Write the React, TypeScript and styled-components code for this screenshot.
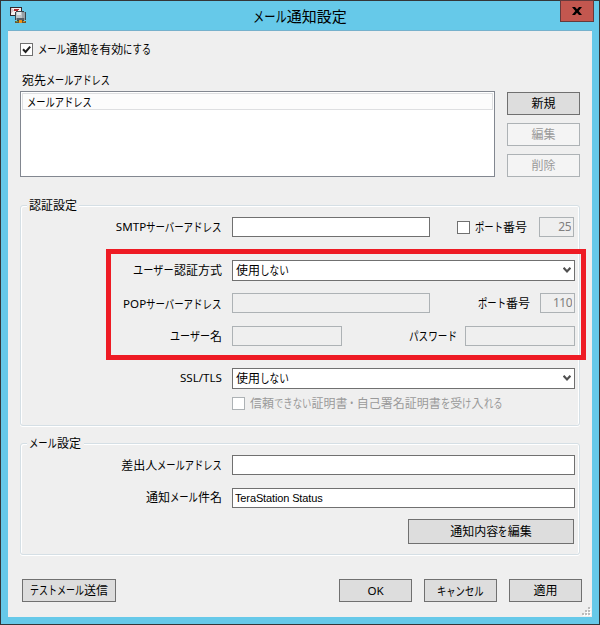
import React from "react";
import styled, { createGlobalStyle, css } from "styled-components";

const GlobalStyle = createGlobalStyle`
  * { box-sizing: border-box; }
  body {
    margin: 0;
    overflow: hidden;
    color: #000;
    font-family: "Noto Sans CJK JP", "Noto Sans", sans-serif;
    font-size: 12px;
  }
`;

/* Text with condensed kana, as in a proportional Japanese UI face. */
const TextLine = styled.span<{ $dy: number }>`
  display: inline-flex;
  align-items: center;
  white-space: pre;
  transform: translateY(${(p) => p.$dy}px);
`;

const KanaRun = styled.span<{ $n: number; $adv: number }>`
  display: block;
  width: ${(p) => p.$n * p.$adv}em;
  transform: scaleX(${(p) => p.$adv});
  transform-origin: 0 50%;
`;

const LatinRun = styled.span`
  font-family: "Noto Sans", sans-serif;
  font-size: 11.6px;
`;

type UiTextProps = { text: string; adv?: number; dy?: number };

function UiText({ text, adv = 0.775, dy = 0 }: UiTextProps) {
  const runs = text.match(/[\u3040-\u30ff]+|[\x20-\x7e]+|[^\u3040-\u30ff\x20-\x7e]+/g) ?? [];
  return (
    <TextLine $dy={dy}>
      {runs.map((run, i) => {
        if (/^[\u3040-\u30ff]/.test(run))
          return (
            <KanaRun key={i} $n={run.length} $adv={adv}>
              {run}
            </KanaRun>
          );
        if (/^[\x20-\x7e]/.test(run)) return <LatinRun key={i}>{run}</LatinRun>;
        return <span key={i}>{run}</span>;
      })}
    </TextLine>
  );
}

const Window = styled.div`
  width: 600px;
  height: 625px;
  display: flex;
  flex-direction: column;
  background: #66c9e9;
  border: 1px solid #343638;
  padding: 0 7px 7px;
`;

const TitleBar = styled.header`
  flex: none;
  height: 29px;
  display: grid;
  grid-template-columns: 60px 1fr 60px;
`;

const AppIcon = styled.svg`
  display: block;
  margin: 5px 0 0 1px;
`;

const Title = styled.h1`
  margin: 0;
  font-size: 15px;
  font-weight: 400;
  line-height: 30px;
  text-align: center;
`;

const CloseButton = styled.button`
  justify-self: end;
  width: 34px;
  height: 22px;
  margin: -1px -2px 0 0;
  padding: 0;
  border: 1px solid #653a3c;
  background: #c3574f;
  display: flex;
  align-items: center;
  justify-content: center;
`;

const Client = styled.main`
  flex: 1;
  display: flex;
  flex-direction: column;
  position: relative;
  background: #efefef;
  border-top: 1px solid #76b1cc;
  padding: 12px 10px 0 12px;
`;

const CheckRow = styled.label<{ $disabled?: boolean }>`
  display: flex;
  align-items: center;
  height: 13px;
  line-height: 13px;
  gap: 5px;
  color: ${(p) => (p.$disabled ? "#9a9a9a" : "#000")};
`;

const CheckBox = styled.span<{ $disabled?: boolean }>`
  flex: none;
  width: 13px;
  height: 13px;
  border: 1px solid ${(p) => (p.$disabled ? "#adb2b5" : "#707070")};
  background: #fff;
  display: flex;
`;

const Caption = styled.div`
  margin: 17px 0 0 2px;
  height: 18px;
  line-height: 16px;
`;

const Recipients = styled.section`
  display: flex;
  gap: 12px;
  height: 86px;
`;

const ListBox = styled.div`
  width: 475px;
  border: 1px solid #828790;
  background: #fff;
  padding: 1px;
`;

const ListHeader = styled.div`
  height: 17px;
  border: 1px solid #dedfe1;
  background: #fcfcfc;
  padding-left: 4px;
  line-height: 15px;
`;

const ButtonColumn = styled.div`
  display: flex;
  flex-direction: column;
  gap: 8px;
  padding-top: 1px;
`;

const Button = styled.button<{ $w: number; $h?: number }>`
  width: ${(p) => p.$w}px;
  height: ${(p) => p.$h ?? 23}px;
  padding: 0;
  border: 1px solid #707070;
  background: #dddddd;
  color: #000;
  font: inherit;
  line-height: 20px;
  display: flex;
  align-items: center;
  justify-content: center;
  &:disabled {
    border-color: #adb2b5;
    background: #f4f4f4;
    color: #9a9a9a;
  }
`;

const Group = styled.fieldset<{ $top: number; $h: number }>`
  min-width: 0;
  width: 560px;
  height: ${(p) => p.$h}px;
  margin: ${(p) => p.$top}px 0 0;
  padding: 0;
  border: 1px solid #d5dfe5;
  border-radius: 3px;
  box-shadow: inset 1px 1px #fff, inset -1px 0 #fff, 0 1px #fff;
`;

const Legend = styled.div<{ $w: number }>`
  width: ${(p) => p.$w}px;
  height: 14px;
  margin: -7px 0 0 6px;
  padding-left: 2px;
  line-height: 14px;
  background: #efefef;
`;

const Row = styled.div<{ $top: number; $h?: number }>`
  display: flex;
  align-items: center;
  height: ${(p) => p.$h ?? 20}px;
  margin: ${(p) => p.$top}px 4px 0 0;
`;

const FieldLabel = styled.label`
  flex: none;
  width: 211px;
  padding-right: 10px;
  display: flex;
  justify-content: flex-end;
  line-height: 18px;
`;

const field = css`
  flex: none;
  border: 1px solid #707070;
  background: #fff;
  color: #000;
`;

const Input = styled.input<{ $w: number }>`
  ${field}
  width: ${(p) => p.$w}px;
  height: 20px;
  padding: 0 2px 1px;
  font: 11px "Liberation Sans", sans-serif;
  letter-spacing: -0.13px;
  &:disabled {
    border-color: #adb2b5;
    background: #efefef;
    color: #808080;
  }
`;

const PortInput = styled(Input)`
  text-align: right;
  font: 12px "Noto Sans", sans-serif;
  letter-spacing: -0.5px;
`;

const SelectBox = styled.div`
  ${field}
  width: 343px;
  height: 21px;
  padding: 0 3px;
  display: flex;
  align-items: center;
  justify-content: space-between;
  line-height: 19px;
`;

const Spacer = styled.span`
  flex: 1;
`;

const PortLabel = styled.span<{ $gap: number }>`
  line-height: 18px;
  margin-right: ${(p) => p.$gap}px;
`;

const PortCheck = styled(CheckRow)`
  margin-right: 12px;
`;

const SmtpRow = styled(Row)`
  margin-right: 5px;
`;

const IndentedCheck = styled(CheckRow)`
  margin: 8px 0 0 211px;
`;

const EditRow = styled.div`
  display: flex;
  justify-content: flex-end;
  margin: 11px 5px 0 0;
`;

const Footer = styled.footer`
  display: flex;
  gap: 12px;
  margin: 24px 0 0 2px;
`;

const Highlight = styled.div`
  position: absolute;
  left: 98px;
  top: 218px;
  width: 480px;
  height: 111px;
  border: 5px solid #ee1b24;
`;

const Grip = styled.svg`
  position: absolute;
  right: 1px;
  bottom: 1px;
`;

function Chevron() {
  return (
    <svg width="8" height="7" viewBox="0 0 8 7">
      <path d="M0.6 0.8 L4 4.4 L7.4 0.8" fill="none" stroke="#505050" strokeWidth="2.2" />
    </svg>
  );
}

const gripDots = [
  [8, 0], [5, 3], [8, 3], [2, 6], [5, 6], [8, 6],
];

export default function App() {
  return (
    <>
      <GlobalStyle />
      <Window>
        <TitleBar>
          <AppIcon width="18" height="18" viewBox="0 0 18 18" shapeRendering="crispEdges">
            <rect x="1" y="1" width="12" height="9" fill="#30282c" />
            <rect x="2" y="2" width="10" height="7" fill="#f6eeee" />
            <path d="M2 2h1v1h1v1h1v1H4v1H3v1H2z" fill="#d8c4c6" />
            <path d="M5 3h5v1H9v2H7V5H5z" fill="#b02a2c" />
            <path d="M7 5h8v1h2v8h-2v1H8v-1H6V6h1z" fill="#3a464d" />
            <rect x="7" y="6" width="9" height="8" fill="#8a949a" />
            <rect x="7" y="6" width="6" height="6" fill="#bcc5c9" />
            <rect x="8" y="6" width="4" height="3" fill="#e6eaeb" />
            <rect x="13" y="7" width="3" height="5" fill="#98a3a8" />
            <rect x="8" y="12" width="7" height="2" fill="#566067" />
            <rect x="10" y="15" width="3" height="1" fill="#4d4a40" />
            <rect x="6" y="15" width="11" height="2" fill="#6c5430" />
            <rect x="7" y="15" width="2" height="1" fill="#6f9a3f" />
            <rect x="10" y="14" width="3" height="3" fill="#ef9418" />
            <rect x="14" y="15" width="2" height="1" fill="#d4902a" />
          </AppIcon>
          <Title>
            <UiText text="メール通知設定" adv={0.75} />
          </Title>
          <CloseButton aria-label="閉じる">
            <svg width="10" height="8" viewBox="0 0 10 8">
              <path d="M0 0h3l2 2.3L7 0h3L6.7 4 10 8H7L5 5.7 3 8H0L3.3 4z" fill="#000" />
            </svg>
          </CloseButton>
        </TitleBar>
        <Client>
          <CheckRow>
            <CheckBox>
              <svg width="11" height="11" viewBox="0 0 11 11">
                <path d="M2 5.2 L4.6 8 L9.2 2.6" fill="none" stroke="#202020" strokeWidth="2" />
              </svg>
            </CheckBox>
            <UiText text="メール通知を有効にする" dy={-1} />
          </CheckRow>
          <Caption>
            <UiText text="宛先メールアドレス" adv={0.76} dy={-1} />
          </Caption>
          <Recipients>
            <ListBox>
              <ListHeader>
                <UiText text="メールアドレス" adv={0.77} />
              </ListHeader>
            </ListBox>
            <ButtonColumn>
              <Button $w={73}><UiText text="新規" dy={-1} /></Button>
              <Button $w={73} disabled><UiText text="編集" dy={-1} /></Button>
              <Button $w={73} disabled><UiText text="削除" dy={-1} /></Button>
            </ButtonColumn>
          </Recipients>

          <Group $top={28} $h={221}>
            <Legend $w={52}><UiText text="認証設定" dy={-1} /></Legend>
            <SmtpRow $top={4}>
              <FieldLabel><UiText text="SMTPサーバーアドレス" adv={0.79} /></FieldLabel>
              <Input $w={198} />
              <Spacer />
              <PortCheck>
                <CheckBox />
                <UiText text="ポート番号" adv={0.78} dy={-1} />
              </PortCheck>
              <PortInput $w={35} defaultValue="25" disabled />
            </SmtpRow>
            <Row $top={23} $h={21}>
              <FieldLabel><UiText text="ユーザー認証方式" adv={0.85} dy={-1} /></FieldLabel>
              <SelectBox><UiText text="使用しない" adv={0.8} dy={-1} /><Chevron /></SelectBox>
            </Row>
            <Row $top={12}>
              <FieldLabel><UiText text="POPサーバーアドレス" adv={0.79} dy={1} /></FieldLabel>
              <Input $w={198} disabled />
              <Spacer />
              <PortLabel $gap={10}><UiText text="ポート番号" adv={0.78} /></PortLabel>
              <PortInput $w={35} defaultValue="110" disabled />
            </Row>
            <Row $top={13}>
              <FieldLabel><UiText text="ユーザー名" adv={0.84} /></FieldLabel>
              <Input $w={110} disabled />
              <Spacer />
              <PortLabel $gap={8}><UiText text="パスワード" adv={0.8} /></PortLabel>
              <Input $w={110} disabled />
            </Row>
            <Row $top={22} $h={21}>
              <FieldLabel><UiText text="SSL/TLS" dy={-1} /></FieldLabel>
              <SelectBox><UiText text="使用しない" adv={0.8} dy={-1} /><Chevron /></SelectBox>
            </Row>
            <IndentedCheck $disabled>
              <CheckBox $disabled />
              <UiText text="信頼できない証明書・自己署名証明書を受け入れる" adv={0.78} dy={-1} />
            </IndentedCheck>
          </Group>

          <Group $top={17} $h={112}>
            <Legend $w={57}><UiText text="メール設定" dy={-1} /></Legend>
            <Row $top={4}>
              <FieldLabel><UiText text="差出人メールアドレス" adv={0.77} /></FieldLabel>
              <Input $w={343} />
            </Row>
            <Row $top={13}>
              <FieldLabel><UiText text="通知メール件名" dy={-1} /></FieldLabel>
              <Input $w={343} defaultValue="TeraStation Status" />
            </Row>
            <EditRow>
              <Button $w={166} $h={25}><UiText text="通知内容を編集" dy={-1} /></Button>
            </EditRow>
          </Group>

          <Footer>
            <Button $w={94}><UiText text="テストメール送信" adv={0.75} dy={-1} /></Button>
            <Spacer />
            <Button $w={73}><UiText text="OK" /></Button>
            <Button $w={73}><UiText text="キャンセル" /></Button>
            <Button $w={73}><UiText text="適用" dy={-1} /></Button>
          </Footer>

          <Highlight />
          <Grip width="10" height="9" viewBox="0 0 10 9" shapeRendering="crispEdges">
            {gripDots.map(([x, y]) => (
              <g key={`${x}-${y}`}>
                <rect x={x} y={y + 1} width="2" height="2" fill="#fff" />
                <rect x={x - 1} y={y} width="2" height="2" fill="#bcbcbc" />
              </g>
            ))}
          </Grip>
        </Client>
      </Window>
    </>
  );
}
